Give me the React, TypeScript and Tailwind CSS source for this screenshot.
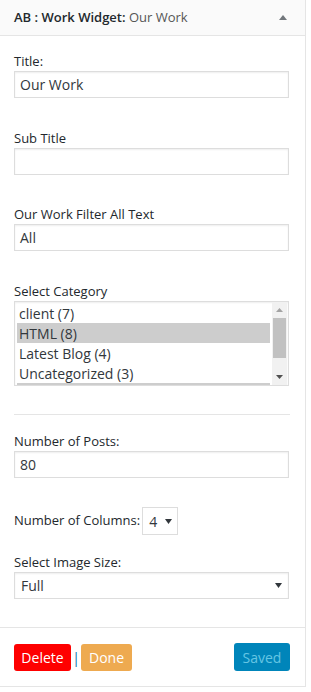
import React from "react";

const font = "font-['Open_Sans','Noto_Sans',sans-serif]";

const Label = ({ text }: { text: string }) => (
  <div className="text-[13px] leading-[19px] text-[#23282d]">{text}</div>
);

const TextInput = ({ value }: { value: string }) => (
  <div className="h-[27px] w-[275px] border border-[#ddd] bg-white shadow-[inset_0_1px_2px_rgba(0,0,0,0.07)] pl-[5px] flex items-center text-[14px] text-[#32373c]">
    {value}
  </div>
);

const Caret = () => (
  <svg width="7" height="5" viewBox="0 0 7 5">
    <path d="M0 0h7L3.5 5z" fill="#32373c" />
  </svg>
);

const categories = [
  { name: "client (7)", on: false },
  { name: "HTML (8)", on: true },
  { name: "Latest Blog (4)", on: false },
  { name: "Uncategorized (3)", on: false },
];

export default function App() {
  return (
    <div className={`w-[306px] h-[687px] bg-white border-r border-b border-[#e5e5e5] flex flex-col ${font}`}>
      <div className="h-[36px] shrink-0 bg-[#fafafa] border-b border-[#e5e5e5] pl-[14px] pr-[18px] flex items-center justify-between">
        <div className="text-[13px] text-[#23282d]">
          <span className="font-semibold">AB : Work Widget:</span>{" "}
          <span className="text-[#555]">Our Work</span>
        </div>
        <svg width="8" height="5" viewBox="0 0 8 5">
          <path d="M0 5L4 0l4 5z" fill="#72777c" />
        </svg>
      </div>

      <div className="px-[14px]">
        <div className="mt-[16px]">
          <Label text="Title:" />
          <TextInput value="Our Work" />
        </div>
        <div className="mt-[31px]">
          <Label text="Sub Title" />
          <TextInput value="" />
        </div>
        <div className="mt-[30px]">
          <Label text="Our Work Filter All Text" />
          <TextInput value="All" />
        </div>
        <div className="mt-[31px]">
          <Label text="Select Category" />
          <div className="h-[85px] w-[275px] border border-[#ddd] bg-white shadow-[inset_0_1px_2px_rgba(0,0,0,0.07)] flex overflow-hidden">
            <div className="flex-1 pt-[1px] pl-[2px] pr-[2px]">
              {categories.map((c) => (
                <div
                  key={c.name}
                  className={`h-[20px] pl-[2px] flex items-center text-[14px] text-[#32373c] whitespace-nowrap ${c.on ? "bg-[#cdcdcd]" : ""}`}
                >
                  {c.name}
                </div>
              ))}
              {/* next selected option, scrolled just out of view */}
              <div className="h-[20px] bg-[#cdcdcd]" />
            </div>
            <div className="w-[15px] mr-[1px] bg-[#f1f1f1] flex flex-col items-center">
              <div className="h-[16px] flex items-center justify-center">
                <svg width="7" height="4" viewBox="0 0 7 4">
                  <path d="M0 4L3.5 0 7 4z" fill="#a3a3a3" />
                </svg>
              </div>
              <div className="w-[13px] h-[40px] bg-[#c1c1c1]" />
              <div className="flex-1" />
              <div className="h-[16px] flex items-center justify-center">
                <svg width="7" height="4" viewBox="0 0 7 4">
                  <path d="M0 0h7L3.5 4z" fill="#505050" />
                </svg>
              </div>
            </div>
          </div>
        </div>

        <div className="mt-[28px] h-px w-[276px] bg-[#e5e5e5]" />

        <div className="mt-[17px]">
          <Label text="Number of Posts:" />
          <TextInput value="80" />
        </div>

        <div className="mt-[29px] flex items-center gap-[2px]">
          <span className="text-[13px] text-[#23282d]">Number of Columns:</span>
          <div className="h-[28px] w-[36px] border border-[#ddd] bg-white flex items-center pl-[6px] gap-[8px] text-[14px] text-[#32373c]">
            4
            <Caret />
          </div>
        </div>

        <div className="mt-[18px]">
          <Label text="Select Image Size:" />
          <div className="h-[27px] w-[275px] border border-[#ddd] bg-white shadow-[inset_0_1px_2px_rgba(0,0,0,0.07)] pl-[6px] pr-[6px] flex items-center justify-between text-[14px] text-[#32373c]">
            Full
            <Caret />
          </div>
        </div>
      </div>

      <div className="mt-[28px] h-px w-full bg-[#e5e5e5]" />

      <div className="mt-[15px] px-[14px] flex items-center">
        <button className="h-[27px] w-[57px] rounded-[3px] bg-[#fe0000] text-white text-[14px] flex items-center justify-center">
          Delete
        </button>
        <span className="w-[10px] flex justify-center text-[14px] text-[#0073aa]">|</span>
        <button className="h-[27px] w-[51px] rounded-[3px] bg-[#eeaa50] text-white text-[14px] flex items-center justify-center">
          Done
        </button>
        <div className="flex-1" />
        <button className="mr-[1px] h-[28px] w-[56px] rounded-[3px] bg-[#0085ba] text-[#66c6e4] text-[14px] flex items-center justify-center">
          Saved
        </button>
      </div>
    </div>
  );
}
